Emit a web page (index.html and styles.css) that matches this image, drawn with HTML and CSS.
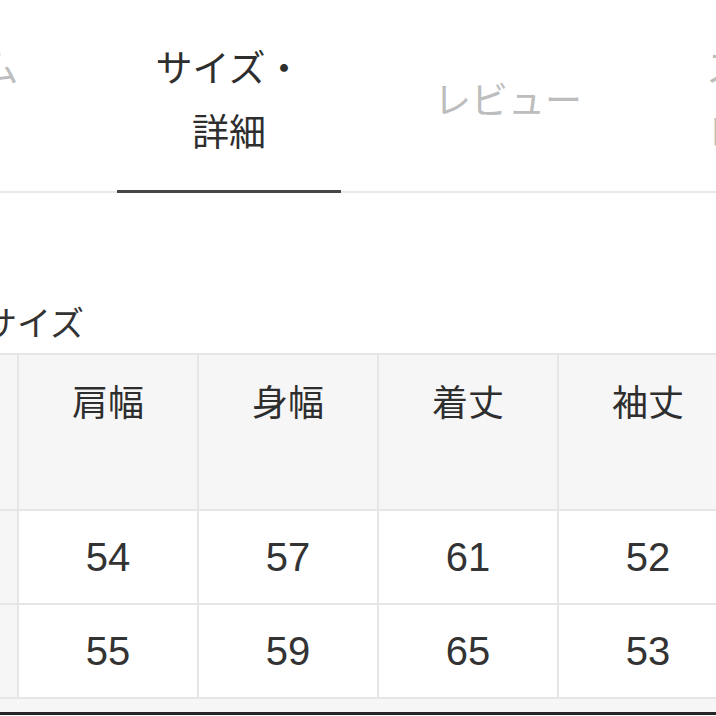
FILE: index.html
```html
<!DOCTYPE html>
<html lang="ja">
<head>
<meta charset="utf-8">
<title>サイズ・詳細</title>
<link rel="stylesheet" href="styles.css">
</head>
<body>
<nav class="tabs">
  <div class="tab">アイテム<br>一覧</div>
  <div class="tab active">サイズ・<br>詳細</div>
  <div class="tab">レビュー</div>
  <div class="tab tab-last">スタッフ<br>レビュー</div>
</nav>
<h2 class="section-title">サイズ</h2>
<table class="size-table">
  <colgroup><col><col><col><col><col></colgroup>
  <thead>
    <tr><th></th><th>肩幅</th><th>身幅</th><th>着丈</th><th>袖丈</th></tr>
  </thead>
  <tbody>
    <tr><td>M</td><td>54</td><td>57</td><td>61</td><td>52</td></tr>
    <tr><td>L</td><td>55</td><td>59</td><td>65</td><td>53</td></tr>
  </tbody>
</table>
<div class="bottom-strip"></div>
</body>
</html>
```
FILE: styles.css
```css
html, body {
  margin: 0;
  padding: 0;
}
body {
  width: 716px;
  height: 716px;
  overflow: hidden;
  background: #ffffff;
  font-family: "Noto Sans CJK JP", "Noto Sans", sans-serif;
  color: #333333;
}
.tabs {
  display: flex;
  gap: 55px;
  margin-left: -166px;
  padding-top: 34px;
  border-bottom: 2px solid #e8e8e8;
  width: 1200px;
}
.tab {
  flex: 0 0 auto;
  width: 148px;
  height: 128px;
  padding: 0 38px 29px;
  display: flex;
  align-items: center;
  justify-content: center;
  text-align: center;
  font-size: 37px;
  line-height: 64px;
  color: #bdbdbd;
  white-space: nowrap;
}
.tab.active {
  color: #2e2e2e;
  margin-left: 4px;
  border-bottom: 3px solid #474747;
  padding-bottom: 28px;
  margin-bottom: -2px;
}
.tab-last {
  margin-left: -7px;
}
.section-title {
  margin: 105px 0 7px -17px;
  font-size: 34px;
  line-height: 48px;
  font-weight: normal;
  color: #333333;
}
.size-table {
  margin-left: -163px;
  border-collapse: collapse;
  table-layout: fixed;
  width: 900px;
}
.size-table col {
  width: 180px;
}
.size-table th,
.size-table td {
  border: 2px solid #e6e6e6;
  text-align: center;
  padding: 0;
}
.size-table th {
  height: 156px;
  background: #f6f6f6;
  vertical-align: top;
  padding-top: 20px;
  box-sizing: border-box;
  font-size: 36px;
  line-height: 50px;
  font-weight: normal;
  color: #2e2e2e;
}
.size-table td {
  height: 92px;
  background: #ffffff;
  font-family: "Liberation Sans", Arial, sans-serif;
  font-size: 40px;
  color: #333333;
}
.size-table tbody td:first-child {
  background: #f6f6f6;
}
.bottom-strip {
  height: 13px;
  background: #f6f6f6;
  border-bottom: 3px solid #262626;
}
```
